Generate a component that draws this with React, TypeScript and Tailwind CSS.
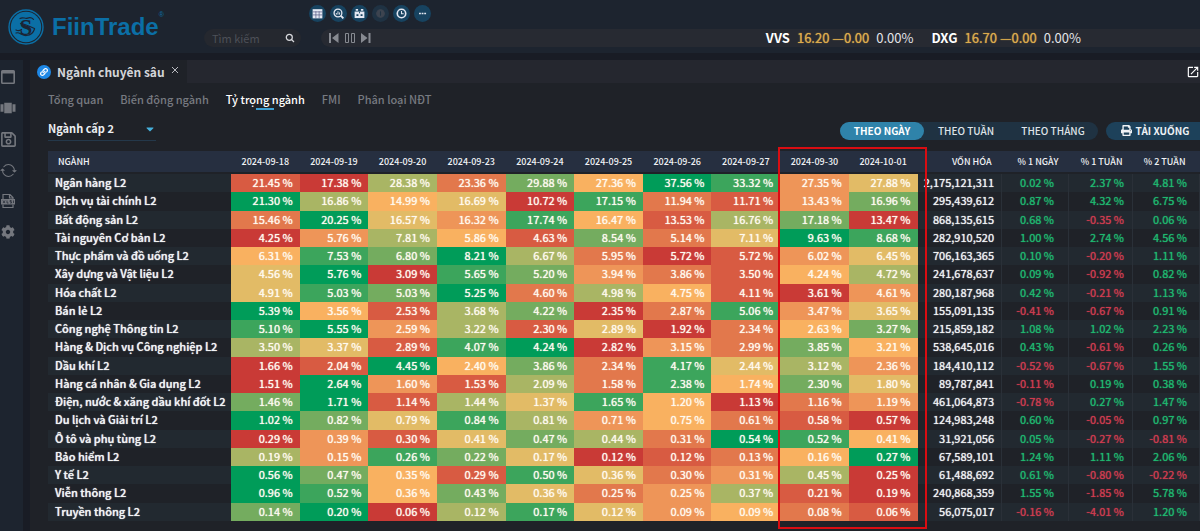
import { useState } from "react";
import type { ReactNode } from "react";
import clsx from "clsx";
import { FaCaretDown, FaCog, FaLink, FaPrint, FaRegSave } from "react-icons/fa";
import { IoSyncOutline } from "react-icons/io5";
import { MdOpenInNew, MdViewCarousel } from "react-icons/md";

const DATES = [
  "2024-09-18",
  "2024-09-19",
  "2024-09-20",
  "2024-09-23",
  "2024-09-24",
  "2024-09-25",
  "2024-09-26",
  "2024-09-27",
  "2024-09-30",
  "2024-10-01",
];

// lowest share of the row -> highest share of the row
const HEAT = [
  "bg-[#c93a36]",
  "bg-[#d85b42]",
  "bg-[#e2784c]",
  "bg-[#ee9558]",
  "bg-[#f9b160]",
  "bg-[#e2bb66]",
  "bg-[#a9b564]",
  "bg-[#74ac5f]",
  "bg-[#3ca55c]",
  "bg-[#009c59]",
];

type Row = {
  name: string;
  shares: string;
  levels: string; // one digit per date, index in HEAT
  cap: string;
  changes: string[];
};

const ROWS: Row[] = [
  { name: "Ngân hàng L2", shares: "21.45 17.38 28.38 23.36 29.88 27.36 37.56 33.32 27.35 27.88", levels: "1062749835", cap: "2,175,121,311", changes: ["0.02", "2.37", "4.81"] },
  { name: "Dịch vụ tài chính L2", shares: "21.30 16.86 14.99 16.69 10.72 17.15 11.94 11.71 13.43 16.96", levels: "9645082137", cap: "295,439,612", changes: ["0.87", "4.32", "6.75"] },
  { name: "Bất động sản L2", shares: "15.46 20.25 16.57 16.32 17.74 16.47 13.53 16.76 17.18 13.47", levels: "2953841670", cap: "868,135,615", changes: ["0.68", "-0.35", "0.06"] },
  { name: "Tài nguyên Cơ bản L2", shares: "4.25 5.76 7.81 5.86 4.63 8.54 5.14 7.11 9.63 8.68", levels: "0364172598", cap: "282,910,520", changes: ["1.00", "2.74", "4.56"] },
  { name: "Thực phẩm và đồ uống L2", shares: "6.31 7.53 6.80 8.21 6.67 5.95 5.72 5.72 6.02 6.45", levels: "4879620135", cap: "706,163,365", changes: ["0.10", "-0.20", "1.11"] },
  { name: "Xây dựng và Vật liệu L2", shares: "4.56 5.76 3.09 5.65 5.20 3.94 3.86 3.50 4.24 4.72", levels: "5908732146", cap: "241,678,637", changes: ["0.09", "-0.92", "0.82"] },
  { name: "Hóa chất L2", shares: "4.91 5.03 5.03 5.25 4.60 4.98 4.75 4.11 3.61 4.61", levels: "5879264103", cap: "280,187,968", changes: ["0.42", "-0.21", "1.13"] },
  { name: "Bán lẻ L2", shares: "5.39 3.56 2.53 3.68 4.22 2.35 2.87 5.06 3.47 3.65", levels: "9416702835", cap: "155,091,135", changes: ["-0.41", "-0.67", "0.91"] },
  { name: "Công nghệ Thông tin L2", shares: "5.10 5.55 2.59 3.22 2.30 2.89 1.92 2.34 2.63 3.27", levels: "8936150247", cap: "215,859,182", changes: ["1.08", "1.02", "2.23"] },
  { name: "Hàng & Dịch vụ Công nghiệp L2", shares: "3.50 3.37 2.89 4.07 4.24 2.82 3.15 2.99 3.85 3.21", levels: "6518903274", cap: "538,645,016", changes: ["0.43", "-0.61", "0.26"] },
  { name: "Dầu khí L2", shares: "1.66 2.04 4.45 2.40 3.86 2.34 4.17 2.44 3.12 2.36", levels: "0194728563", cap: "184,410,112", changes: ["-0.52", "-0.67", "1.55"] },
  { name: "Hàng cá nhân & Gia dụng L2", shares: "1.51 2.64 1.60 1.53 2.09 1.58 2.38 1.74 2.30 1.80", levels: "0931628475", cap: "89,787,841", changes: ["-0.11", "0.19", "0.38"] },
  { name: "Điện, nước & xăng dầu khí đốt L2", shares: "1.46 1.71 1.14 1.44 1.37 1.65 1.20 1.13 1.16 1.19", levels: "7916584023", cap: "461,064,873", changes: ["-0.78", "0.27", "1.47"] },
  { name: "Du lịch và Giải trí L2", shares: "1.02 0.82 0.79 0.84 0.81 0.71 0.75 0.61 0.58 0.57", levels: "9758634210", cap: "124,983,248", changes: ["0.60", "-0.05", "0.97"] },
  { name: "Ô tô và phụ tùng L2", shares: "0.29 0.39 0.30 0.41 0.47 0.44 0.31 0.54 0.52 0.41", levels: "0315762984", cap: "31,921,056", changes: ["0.05", "-0.27", "-0.81"] },
  { name: "Bảo hiểm L2", shares: "0.19 0.15 0.26 0.22 0.17 0.12 0.12 0.13 0.16 0.27", levels: "6387501249", cap: "67,589,101", changes: ["1.24", "1.11", "2.06"] },
  { name: "Y tế L2", shares: "0.56 0.47 0.35 0.29 0.50 0.36 0.30 0.31 0.45 0.25", levels: "9741852360", cap: "61,488,692", changes: ["0.61", "-0.80", "-0.22"] },
  { name: "Viễn thông L2", shares: "0.96 0.52 0.36 0.43 0.36 0.25 0.25 0.37 0.21 0.19", levels: "9847523610", cap: "240,868,359", changes: ["1.55", "-1.85", "5.78"] },
  { name: "Truyền thông L2", shares: "0.14 0.20 0.06 0.12 0.17 0.12 0.09 0.09 0.08 0.06", levels: "7906853421", cap: "56,075,017", changes: ["-0.16", "-4.01", "1.20"] },
];

const TABS = ["Tổng quan", "Biến động ngành", "Tỷ trọng ngành", "FMI", "Phân loại NĐT"];

const PERIODS = [
  { label: "THEO NGÀY", width: "w-[84px]" },
  { label: "THEO TUẦN", width: "w-[84px]" },
  { label: "THEO THÁNG", width: "w-[90px]" },
];

function Logo() {
  return (
    <a href="#" aria-label="FiinTrade" className="flex w-[204px] shrink-0 items-center gap-2 pl-2 text-[#0b6fa6]">
      <svg viewBox="0 0 36 36" className="size-9">
        <circle cx="18" cy="18" r="17" fill="none" stroke="currentColor" strokeWidth="1.4" />
        <circle cx="18" cy="18" r="15.2" fill="currentColor" />
        <text x="18" y="25.5" textAnchor="middle" fontFamily="Liberation Serif, serif" fontWeight="700" fontSize="23" fill="#1b2535">
          S
        </text>
        <g fill="none" stroke="#1b2535" strokeWidth="1.2" strokeLinecap="round">
          <path d="M12 9.500c3-2 5 .6 7.500-.4s4-.8 6 1.200" />
          <path d="M12.500 14.500c5 .5 9 3 14 5" />
          <path d="M8 24c3.500-1.500 6 3 10.500 2.500s7-3 8-6.500" />
          <path d="M8 21c2 1 4 .5 5.500-.5" />
        </g>
      </svg>
      <span className="relative font-['Liberation_Sans',sans-serif] text-2xl leading-9 font-bold">
        FiinTrade
        <span className="absolute -top-1 left-full text-[7px] leading-5 font-normal">®</span>
      </span>
    </a>
  );
}

function RoundButton({ label, dim, children }: { label: string; dim?: boolean; children: ReactNode }) {
  return (
    <button
      aria-label={label}
      className={clsx(
        "flex size-[17px] items-center justify-center rounded-full",
        dim ? "bg-[#1f3243] text-[#3d4450]" : "bg-[#174360] text-[#e4e8f2]"
      )}
    >
      <svg viewBox="0 0 12 12" className="size-[13px]" fill="none" stroke="currentColor">
        {children}
      </svg>
    </button>
  );
}

function Toolbar() {
  return (
    <div className="flex h-[17px] gap-1 pl-[105px]">
      <RoundButton label="Bảng">
        <rect x="1.500" y="2" width="9" height="8.500" fill="currentColor" stroke="none" />
        <path d="M1.500 4.500h9M1.500 7.300h9M4.500 4v6.500M7.500 4v6.500" stroke="#4a4f7b" strokeWidth=".6" />
      </RoundButton>
      <RoundButton label="Tra cứu">
        <circle cx="5.500" cy="5.500" r="3.600" strokeWidth="1.200" />
        <path d="M8 8l2.500 2.500" strokeWidth="1.700" />
        <path d="M4 7V5.500M5.500 7V4M7 7V5" strokeWidth=".9" />
      </RoundButton>
      <RoundButton label="Lịch">
        <path d="M1.500 4.200h9v6h-9z" fill="currentColor" stroke="none" />
        <path d="M2.500 2.700h2.200M7.300 2.700h2.200" strokeWidth="1.600" />
        <path d="M3.200 7.500h1.800M7 7.500h1.800" stroke="#174360" strokeWidth="1.500" />
        <path d="M6 4.200v1.600" stroke="#174360" strokeWidth=".8" />
      </RoundButton>
      <RoundButton label="Thông tin" dim>
        <circle cx="6" cy="6" r="3.500" fill="currentColor" />
        <path d="M6 4v4" stroke="#1f3243" />
      </RoundButton>
      <RoundButton label="Lịch sử">
        <circle cx="6" cy="6" r="3.900" strokeWidth="1.500" />
        <path d="M6 3.800V6.200h2" />
      </RoundButton>
      <RoundButton label="Thêm">
        <path d="M2.800 6h1.700M5.200 6h1.700M7.600 6h1.700" strokeWidth="1.500" />
      </RoundButton>
    </div>
  );
}

function Quote({ code, price }: { code: string; price: string }) {
  return (
    <div className="flex gap-[7px] text-[13px]">
      <span className="font-bold text-white">{code}</span>
      <span className="text-[#dcab4c] [text-shadow:0_0_1px_currentColor]">{price} —0.00</span>
      <span className="text-[#e3e4e8]">0.00%</span>
    </div>
  );
}

function Header() {
  return (
    <header className="flex h-[53px] bg-[#1d242f]">
      <Logo />
      <div className="flex flex-1 flex-col gap-[7px] pt-[5px]">
        <Toolbar />
        <div className="flex h-[18px]">
          <div className="flex w-[97px] items-center rounded-full bg-[#25282f] pr-1.5 pl-2">
            <input
              aria-label="Tìm kiếm"
              placeholder="Tìm kiếm"
              className="w-full min-w-0 bg-transparent text-[11px] leading-4 outline-none placeholder:text-[#4d5058]"
            />
            <svg viewBox="0 0 10 10" className="size-2.5 shrink-0" fill="none" stroke="#d5d6da" strokeWidth="1.300">
              <circle cx="4.300" cy="4.300" r="3" />
              <path d="M6.500 6.500L9 9" />
            </svg>
          </div>
          <div className="ml-5 flex flex-1 items-center rounded-l-full bg-[#272a32] pr-[119px] pl-[7px]">
            <div className="flex gap-1 text-[#878a91]">
              <button aria-label="Trước">
                <svg viewBox="0 0 12 12" className="size-3" fill="currentColor">
                  <path d="M1 1h2v10H1zM10.500 1v10L4 6z" />
                </svg>
              </button>
              <button aria-label="Tạm dừng">
                <svg viewBox="0 0 12 12" className="size-3" fill="none" stroke="currentColor">
                  <path d="M1.500 1.500h3v9h-3zM7.500 1.500h3v9h-3z" />
                </svg>
              </button>
              <button aria-label="Sau">
                <svg viewBox="0 0 12 12" className="size-3" fill="currentColor">
                  <path d="M8.500 1h2v10h-2zM1 1v10l6.500-5z" />
                </svg>
              </button>
            </div>
            <div className="ml-auto flex gap-[18px] leading-[18px]">
              <Quote code="VVS" price="16.20" />
              <Quote code="DXG" price="16.70" />
            </div>
          </div>
        </div>
      </div>
    </header>
  );
}

function Sidebar() {
  const items = [
    {
      label: "Cửa sổ",
      icon: (
        <svg viewBox="0 0 16 16" className="size-4" fill="currentColor">
          <path fillRule="evenodd" d="M2.500 1h11A1.500 1.500 0 0 1 15 2.500v11a1.500 1.500 0 0 1-1.500 1.500h-11A1.500 1.500 0 0 1 1 13.500v-11A1.500 1.500 0 0 1 2.500 1zM2.600 4.500v9h10.800v-9z" />
        </svg>
      ),
    },
    { label: "Bố cục", icon: <MdViewCarousel className="size-[18px] shrink-0" /> },
    { label: "Lưu", icon: <FaRegSave className="size-[17px] shrink-0" /> },
    { label: "Đồng bộ", icon: <IoSyncOutline className="size-[17px] shrink-0" /> },
    {
      label: "Xuất tệp",
      icon: (
        <svg viewBox="0 0 16 16" className="size-4" fill="none" stroke="currentColor" strokeWidth="1.200">
          <path d="M3 6V1.500h7L13 4.500V6M3 11.500v3h10v-3M9.500 1.500V5H13" />
          <path d="M1 6h14v5.500H1z" fill="currentColor" stroke="none" />
          <path d="M3 7.500l2 2.500M5 7.500L3 10M7 7.500V10h1.500M11.500 7.500h-1.500v1.200h1.500V10H10M13.500 7.500V10" stroke="#1d242f" strokeWidth=".7" />
        </svg>
      ),
    },
    { label: "Cài đặt", icon: <FaCog className="size-3.5" /> },
  ];

  return (
    <nav className="flex w-[23px] shrink-0 flex-col gap-[13px] bg-[#1d242f] pt-2 text-[#74777e]">
      {items.map((item) => (
        <button key={item.label} aria-label={item.label} className="flex h-[18px] w-4 items-center justify-center">
          {item.icon}
        </button>
      ))}
    </nav>
  );
}

function Filters() {
  const [period, setPeriod] = useState("THEO NGÀY");

  return (
    <div className="flex items-center justify-between pl-[18px]">
      <div className="relative w-[108px] border-b border-[#24384a] pb-1">
        <select
          aria-label="Cấp ngành"
          className="block w-full appearance-none bg-transparent text-[11px] leading-4 font-bold text-[#eceef1] outline-none"
        >
          <option>Ngành cấp 2</option>
        </select>
        <FaCaretDown className="pointer-events-none absolute top-[3px] right-0 size-3 text-[#45b0dc]" />
      </div>
      <div className="flex gap-2 text-[10px] leading-[18px]">
        <div className="flex rounded-full bg-[#1f3242]">
          {PERIODS.map((p) => (
            <button
              key={p.label}
              onClick={() => setPeriod(p.label)}
              className={clsx(
                "rounded-full",
                p.width,
                p.label === period ? "bg-[#2f83aa] font-bold text-white" : "font-medium text-[#dfe3e8]"
              )}
            >
              {p.label}
            </button>
          ))}
        </div>
        <button className="flex w-[94px] items-center justify-center gap-1 rounded-l-full bg-[#1d415a] pl-1 font-bold whitespace-nowrap text-[#eef1f5]">
          <FaPrint className="size-[11px]" />
          TẢI XUỐNG
        </button>
      </div>
    </div>
  );
}

function IndustryTable() {
  return (
    <div className="relative mt-2.5 ml-[18px]">
      <table className="h-[370px] w-full table-fixed border-collapse text-[11px] leading-4">
        <colgroup>
          <col className="w-[183px]" />
          {DATES.map((d) => (
            <col key={d} />
          ))}
          <col className="w-[84px]" />
          <col className="w-[67px]" />
          <col className="w-[64px]" />
          <col className="w-[67px]" />
        </colgroup>
        <thead className="bg-[#262f40] text-[9px] leading-[21px] text-[#f0f2f5]">
          <tr className="border-b-2 border-[#1f2228] whitespace-nowrap">
            <th className="p-0 pl-2.5 text-left font-medium">NGÀNH</th>
            {DATES.map((d) => (
              <th key={d} className="p-0 text-center font-medium">
                {d}
              </th>
            ))}
            <th className="p-0 pr-2.5 text-right font-medium">VỐN HÓA</th>
            <th className="p-0 pr-2.5 text-right font-medium">% 1 NGÀY</th>
            <th className="p-0 pr-2.5 text-right font-medium">% 1 TUẦN</th>
            <th className="p-0 pr-3.5 text-right font-medium">% 2 TUẦN</th>
          </tr>
        </thead>
        <tbody className="[text-shadow:0_0_1px_currentColor]">
          {ROWS.map((row) => (
            <tr key={row.name} className="odd:bg-[#222930] even:bg-[#1f2228]">
              <th scope="row" className="p-0 pb-0.5 pl-[7px] text-left font-medium whitespace-nowrap text-[#f1f3f5]">
                {row.name}
              </th>
              {row.shares.split(" ").map((share, i) => (
                <td
                  key={DATES[i]}
                  className={clsx("p-0 pr-[7px] pb-0.5 text-right text-[#fffaf0]", HEAT[Number(row.levels[i])])}
                >
                  {share} %
                </td>
              ))}
              <td className="border-r border-[#2a3038] p-0 pr-[7px] pb-0.5 text-right text-[#f1f3f5]">{row.cap}</td>
              {row.changes.map((c, i) => (
                <td
                  key={i}
                  className={clsx(
                    "border-r border-[#2a3038] p-0 pb-0.5 text-right",
                    i === 0 && "pr-3.5",
                    i === 1 && "pr-2",
                    i === 2 && "pr-3",
                    c.startsWith("-") ? "text-[#cf3c4f]" : "text-[#1fb86f]"
                  )}
                >
                  {c} %
                </td>
              ))}
            </tr>
          ))}
        </tbody>
      </table>
      {/* frame round the two latest sessions */}
      <div className="pointer-events-none absolute -top-1 right-[273px] -bottom-2 w-[149px] border-2 border-[#d90d12]" />
    </div>
  );
}

export default function App() {
  const [tab, setTab] = useState("Tỷ trọng ngành");

  return (
    <div className="flex min-h-screen flex-col overflow-hidden bg-[#191c25] font-['Noto_Sans_CJK_SC','Noto_Sans',sans-serif] text-[#e9ebee]">
      <Header />
      <div className="mt-[7px] flex flex-1 gap-[7px]">
        <Sidebar />
        <main className="min-w-0 flex-1 bg-[#1f2228]">
          <div className="flex h-[23px] items-center justify-between bg-[#25272f]">
            <div className="flex h-full w-[157px] items-center gap-1.5 bg-[#1f2228] pl-[7px]">
              <span className="flex size-3.5 items-center justify-center rounded-full bg-[#1e88e5] text-white">
                <FaLink className="size-2" />
              </span>
              <h1 className="text-xs leading-5 font-bold whitespace-nowrap text-[#d3d5d9]">Ngành chuyên sâu</h1>
              <button aria-label="Đóng" className="mb-1">
                <svg viewBox="0 0 8 8" className="size-2" stroke="#b9bbc0" strokeWidth="1">
                  <path d="M1 1l6 6M7 1L1 7" />
                </svg>
              </button>
            </div>
            <button aria-label="Mở cửa sổ mới">
              <MdOpenInNew className="size-3.5 text-white" />
            </button>
          </div>
          <div className="flex gap-[17px] pt-[5px] pb-2.5 pl-[18px] text-[11px] leading-[22px] font-medium [text-shadow:0_0_1px_currentColor]">
            {TABS.map((t) => (
              <button
                key={t}
                onClick={() => setTab(t)}
                className={clsx("relative", t === tab ? "text-white" : "text-[#777a81]")}
              >
                {t}
                {t === tab && <span className="absolute bottom-0 left-1/2 h-0.5 w-[18px] -translate-x-1/2 bg-[#3d9fd3]" />}
              </button>
            ))}
          </div>
          <Filters />
          <IndustryTable />
        </main>
      </div>
    </div>
  );
}
